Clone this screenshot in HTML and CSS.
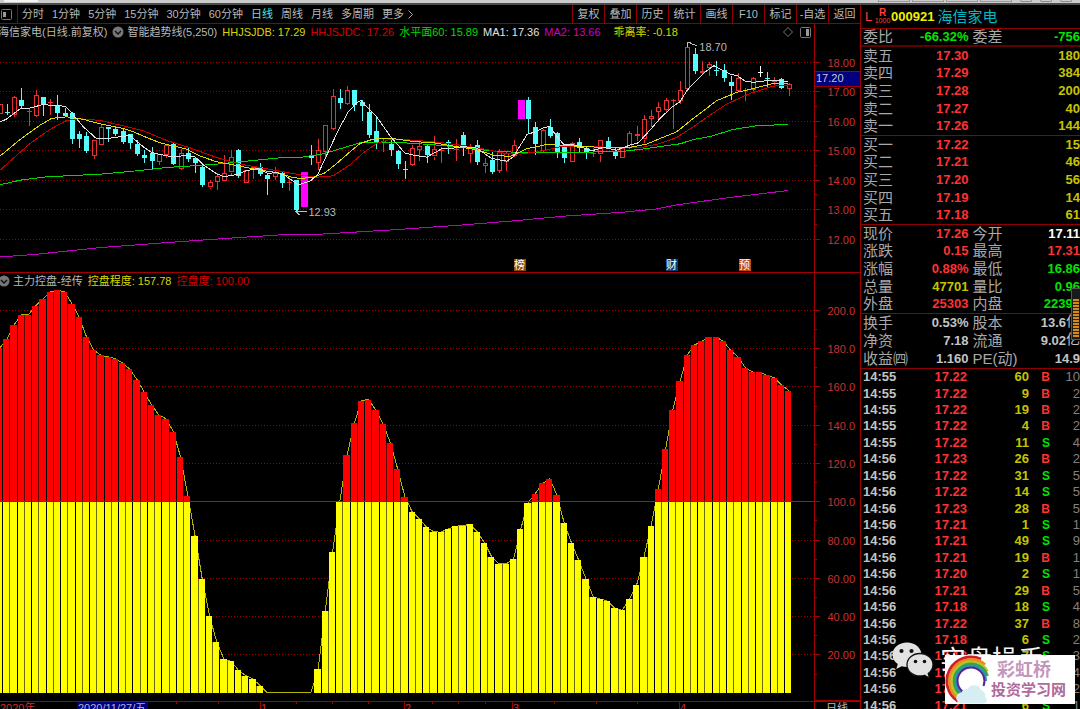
FILE: index.html
```html
<!DOCTYPE html>
<html lang="zh-CN">
<head>
<meta charset="utf-8">
<meta name="viewport" content="width=device-width, initial-scale=1">
<title>海信家电 000921 日线</title>
<link rel="stylesheet" href="styles.css">
</head>
<body>
<div class="strip">
  <span class="strip-tab"></span>
  <span class="strip-slots"><i></i><i></i><i></i><i></i><b></b><b></b><b></b></span>
</div>
<div class="app">
  <main class="charts">
    <nav class="toolbar">
      <button class="dock" aria-label="侧栏"><svg width="11" height="11" viewBox="0 0 11 11"><rect x="0.5" y="0.5" width="10" height="10" rx="1" fill="none" stroke="#777"/><rect x="2" y="3" width="3" height="5" fill="#999"/></svg></button>
      <div class="periods">
        <button>分时</button><button>1分钟</button><button>5分钟</button><button>15分钟</button><button>30分钟</button><button>60分钟</button><button class="active">日线</button><button>周线</button><button>月线</button><button>多周期</button><button>更多<svg class="chev" width="5" height="9" viewBox="0 0 5 9"><path d="M0.5 0.5L4.5 4.5L0.5 8.5" fill="none" stroke="#aaa"/></svg></button>
      </div>
      <div class="tools">
        <button>复权</button><button>叠加</button><button>历史</button><button>统计</button><button>画线</button><button>F10</button><button>标记</button><button>-自选</button><button>返回</button>
      </div>
    </nav>

    <section class="panel price">
      <svg class="plot" id="price"></svg>
      <header class="legend">
        <span class="title">海信家电(日线.前复权)</span>
        <button aria-label="指标菜单"><svg width="12" height="12" viewBox="0 0 12 12"><circle cx="6" cy="6" r="5.5" fill="#777"/><path d="M3 5L6 8L9 5" fill="none" stroke="#111" stroke-width="1.5"/></svg></button>
        <span>智能趋势线(5,250)</span>
        <span class="yellow">HHJSJDB: 17.29</span>
        <span class="crimson">HHJSJDC: 17.26</span>
        <span class="lime">水平面60: 15.89</span>
        <span class="white">MA1: 17.36</span>
        <span class="magenta">MA2: 13.66</span>
        <span class="yellow bias">乖离率: -0.18</span>
        <span class="marks">
          <svg width="12" height="12" viewBox="0 0 12 12"><path d="M6 1.5L10.5 6L6 10.5L1.5 6Z" fill="none" stroke="#777"/></svg>
          <svg width="11" height="11" viewBox="0 0 11 11"><rect x="0.5" y="0.5" width="10" height="10" rx="1" fill="none" stroke="#777"/><rect x="6" y="2" width="3" height="7" fill="#999"/></svg>
        </span>
      </header>
    </section>

    <section class="panel control">
      <svg class="plot" id="control"></svg>
      <header class="legend">
        <button class="first" aria-label="指标菜单"><svg width="12" height="12" viewBox="0 0 12 12"><circle cx="6" cy="6" r="5.5" fill="#777"/><path d="M3 5L6 8L9 5" fill="none" stroke="#111" stroke-width="1.5"/></svg></button>
        <span>主力控盘-经传</span>
        <span class="yellow">控盘程度: 157.78</span>
        <span class="crimson">控盘度: 100.00</span>
      </header>
    </section>
    <svg class="dates" id="dates"></svg>
  </main>

  <aside class="quote">
    <h1><span class="l">L</span><span class="r"><b>R</b><small>1000</small></span><span class="code">000921</span><span class="name">海信家电</span></h1>
    <table class="grid ratio"><tbody>
      <tr><th>委比</th><td class="g">-66.32%</td><th>委差</th><td class="g">-756</td></tr>
    </tbody></table>
    <table class="grid five"><tbody>
      <tr><th>卖五</th><td class="r">17.30</td><th></th><td class="y">180</td></tr>
      <tr><th>卖四</th><td class="r">17.29</td><th></th><td class="y">384</td></tr>
      <tr><th>卖三</th><td class="r">17.28</td><th></th><td class="y">200</td></tr>
      <tr><th>卖二</th><td class="r">17.27</td><th></th><td class="y">40</td></tr>
      <tr><th>卖一</th><td class="r">17.26</td><th></th><td class="y">144</td></tr>
    </tbody></table>
    <table class="grid five"><tbody>
      <tr><th>买一</th><td class="r">17.22</td><th></th><td class="y">15</td></tr>
      <tr><th>买二</th><td class="r">17.21</td><th></th><td class="y">46</td></tr>
      <tr><th>买三</th><td class="r">17.20</td><th></th><td class="y">56</td></tr>
      <tr><th>买四</th><td class="r">17.19</td><th></th><td class="y">14</td></tr>
      <tr><th>买五</th><td class="r">17.18</td><th></th><td class="y">61</td></tr>
    </tbody></table>
    <table class="grid five"><tbody>
      <tr><th>现价</th><td class="r">17.26</td><th>今开</th><td class="w">17.11</td></tr>
      <tr><th>涨跌</th><td class="r">0.15</td><th>最高</th><td class="r">17.31</td></tr>
      <tr><th>涨幅</th><td class="r">0.88%</td><th>最低</th><td class="g">16.86</td></tr>
      <tr><th>总量</th><td class="y">47701</td><th>量比</th><td class="g">0.96</td></tr>
      <tr><th>外盘</th><td class="r">25303</td><th>内盘</th><td class="g">22398</td></tr>
    </tbody></table>
    <table class="grid three"><tbody>
      <tr><th>换手</th><td>0.53%</td><th>股本</th><td>13.6<em>亿</em></td></tr>
      <tr><th>净资</th><td>7.18</td><th>流通</th><td>9.02<em>亿</em></td></tr>
      <tr><th>收益㈣</th><td>1.160</td><th>PE(动)</th><td>14.9</td></tr>
    </tbody></table>
    <div class="ticks">
    <table><tbody>
      <tr><td>14:55</td><td>17.22</td><td>60</td><td class="b">B</td><td>10</td></tr>
      <tr><td>14:55</td><td>17.22</td><td>9</td><td class="b">B</td><td>2</td></tr>
      <tr><td>14:55</td><td>17.22</td><td>19</td><td class="b">B</td><td>2</td></tr>
      <tr><td>14:55</td><td>17.22</td><td>4</td><td class="b">B</td><td>2</td></tr>
      <tr><td>14:55</td><td>17.22</td><td>11</td><td class="s">S</td><td>4</td></tr>
      <tr><td>14:56</td><td>17.23</td><td>26</td><td class="b">B</td><td>2</td></tr>
      <tr><td>14:56</td><td>17.22</td><td>31</td><td class="s">S</td><td>5</td></tr>
      <tr><td>14:56</td><td>17.22</td><td>14</td><td class="s">S</td><td>5</td></tr>
      <tr><td>14:56</td><td>17.23</td><td>28</td><td class="b">B</td><td>5</td></tr>
      <tr><td>14:56</td><td>17.21</td><td>1</td><td class="s">S</td><td>1</td></tr>
      <tr><td>14:56</td><td>17.21</td><td>49</td><td class="s">S</td><td>9</td></tr>
      <tr><td>14:56</td><td>17.21</td><td>19</td><td class="b">B</td><td>1</td></tr>
      <tr><td>14:56</td><td>17.20</td><td>2</td><td class="s">S</td><td>1</td></tr>
      <tr><td>14:56</td><td>17.21</td><td>29</td><td class="b">B</td><td>5</td></tr>
      <tr><td>14:56</td><td>17.18</td><td>18</td><td class="s">S</td><td>4</td></tr>
      <tr><td>14:56</td><td>17.22</td><td>37</td><td class="b">B</td><td>8</td></tr>
      <tr><td>14:56</td><td>17.18</td><td>6</td><td class="s">S</td><td>2</td></tr>
      <tr><td>14:56</td><td>17.18</td><td>7</td><td class="s">S</td><td>3</td></tr>
      <tr><td>14:56</td><td>17.19</td><td>5</td><td class="s">S</td><td>4</td></tr>
      <tr><td>14:56</td><td>17.20</td><td>8</td><td class="s">S</td><td>2</td></tr>
      <tr><td>14:56</td><td>17.21</td><td>6</td><td class="s">S</td><td>1</td></tr>
    </tbody></table>
    </div>
    <div class="meter"></div>
    <div class="wechat">
      <svg width="42" height="36" viewBox="0 0 42 36"><path d="M15 0.5C7 0.5 0.5 5.8 0.5 12.6c0 4 2 7.300 5.300 9.500L4.300 27l5.400-2.800c1.700.5 3.400.8 5.300.8 8 0 14.500-5.400 14.500-12.200S23 0.500 15 0.500Z" fill="#e2e2e2"/><circle cx="9.500" cy="9" r="2.100" fill="#111"/><circle cx="19.500" cy="9" r="2.100" fill="#111"/><path d="M28 11.500c-7.300 0-13 4.900-13 11.200S20.700 34 28 34c1.600 0 3-.2 4.400-.7L37.500 36l-1.300-4.600C39 29.300 41 26.200 41 22.700 41 16.400 35.300 11.500 28 11.500Z" fill="#e2e2e2" stroke="#111" stroke-width="1.300"/><circle cx="23.500" cy="19.500" r="1.800" fill="#111"/><circle cx="32.500" cy="19.500" r="1.800" fill="#111"/></svg>
      <span>实盘操手</span>
    </div>
    <div class="brand">
      <svg width="46" height="49" viewBox="0 0 46 49">
        <g fill="none" stroke-width="3">
          <path d="M13 46.200A24 24 0 0 1 36 4.200" stroke="#c8232c"/>
          <path d="M14.500 44.200A21.500 21.500 0 1 1 40 9.700" stroke="#f08a1d"/>
          <path d="M16 42.200A19 19 0 1 1 42.400 16.400" stroke="#b5c433"/>
          <path d="M17 40.400A17 17 0 1 1 42.400 21" stroke="#37a34a"/>
          <path d="M18 38.700A15 15 0 1 1 41 26" stroke="#2a8fc4" stroke-width="2"/>
          <path d="M18.500 37.200A13.500 13.500 0 1 1 38.500 31" stroke="#54288a" stroke-width="2"/>
        </g>
        <path d="M17 48.500a5.500 5.500 0 0 1-.5-11 5.500 5.500 0 0 1 6-3.500 7.500 7.500 0 0 1 13.500 1 5.500 5.500 0 0 1 4 7 3.500 3.500 0 0 1-1 6.500Z" fill="#d6eef2"/>
      </svg>
      <p><strong>彩虹桥</strong><b>投资学习网</b></p>
    </div>
  </aside>
</div>
<script src="chart.js"></script>
</body>
</html>
```

FILE: styles.css
```css
* { box-sizing: border-box; }

body {
  margin: 0;
  height: 100vh;
  overflow: hidden;
  display: flex;
  flex-direction: column;
  background: #000;
  color: #b8b8b8;
  font: 11px/16px "Liberation Sans", "Noto Sans CJK SC", sans-serif;
}

button {
  margin: 0;
  padding: 0;
  border: 0;
  background: none;
  color: inherit;
  font: inherit;
  white-space: nowrap;
}

svg { display: block; }

.strip {
  flex: none;
  height: 5px;
  display: flex;
  justify-content: space-between;
  padding: 0 8px 0 4px;
  background: #cbcbcb;
  border-bottom: 2px solid #4a4a4a;
}
.strip-tab { width: 34px; height: 2px; background: #f2f2f2; }
.strip-slots { display: flex; gap: 2px; height: 2px; }
.strip-slots i { width: 32px; border: 1px solid #999; border-top: 0; }
.strip-slots b {
  width: 12px;
  margin-left: 6px;
  border: 1px solid #888;
  border-top: 0;
  border-radius: 0 0 6px 6px;
}

.app { flex: 1; min-height: 0; display: flex; }
.charts { flex: 1; min-width: 0; display: flex; flex-direction: column; }

.toolbar {
  flex: none;
  height: 19px;
  display: flex;
  border-bottom: 1px solid #900000;
}
.dock { padding: 0 4px 0 1px; border-right: 1px solid #900000; width: 18px; }
.periods { display: flex; gap: 8px; padding-left: 4px; }
.periods button { display: flex; align-items: center; gap: 4px; }
.periods .active { color: #4fe6e6; }
.tools { display: flex; margin-left: auto; }
.tools button { width: 32px; border-left: 1px solid #900000; }

.panel { display: grid; min-height: 0; border-bottom: 1px solid #a00000; }
.panel > * { grid-area: 1 / 1; min-width: 0; }
.price { flex: 249; }
.control { flex: 429; }
.plot { width: 100%; height: 100%; min-height: 0; overflow: hidden; }
.legend {
  z-index: 1;
  align-self: start;
  height: 16px;
  display: flex;
  align-items: center;
  gap: 5px;
  padding-right: 49px;
  white-space: nowrap;
}
.title { margin-left: -2px; }
.first { margin-left: -2px; }
.legend button + span { margin-left: -2px; }
.bias { margin-left: 8px; }
.marks { display: flex; align-items: center; gap: 6px; margin-left: auto; }
.yellow { color: #d8d800; }
.crimson { color: #d00000; }
.lime { color: #00dc00; }
.white { color: #e4e4e4; }
.magenta { color: #c800c8; }
.dates { flex: none; width: 100%; height: 7px; overflow: hidden; }

.plot text, .dates text { font: 11px "Liberation Sans", "Noto Sans CJK SC", sans-serif; }
.plot .badge { fill: #fff; }

.quote {
  flex: none;
  width: 220px;
  position: relative;
  display: flex;
  flex-direction: column;
  overflow: hidden;
  border-left: 1px solid #a00000;
  white-space: nowrap;
}
.quote h1 {
  flex: none;
  height: 24px;
  margin: 0;
  display: flex;
  align-items: center;
  padding-left: 4px;
  border-bottom: 1px solid #900000;
  font-size: 13px;
  color: #ff3c3c;
}
.quote .l { width: 9px; font-weight: 400; }
h1 .r { display: grid; width: 17px; justify-items: center; line-height: 9px; font-size: 10px; }
h1 .r small { font-size: 7px; line-height: 8px; font-weight: 400; }
.code { color: #f0f000; }
.name { margin-left: 3px; color: #00b8c8; font-size: 15px; font-weight: 400; }

table { width: 100%; table-layout: fixed; border-collapse: separate; border-spacing: 0; }
th, td { padding: 0; line-height: 16px; }
.grid { flex: none; border-bottom: 1px solid #900000; }
.grid th { width: 44px; padding-left: 2px; text-align: left; font-size: 15px; font-weight: 400; color: #a8a8a8; }
.grid td { text-align: right; font-size: 13px; font-weight: 700; color: #c4c4c4; }
.grid em { font-style: normal; font-weight: 400; font-size: 14px; line-height: 12px; vertical-align: top; }
.grid th:nth-child(3) { width: 48px; padding-left: 4px; }
.ratio { height: 18px; border-bottom: 2px solid #600000; }
.five { height: 89px; }
.three { height: 55px; }
.grid .r { color: #ff3232; }
.grid .g { color: #00e400; }
.grid .y { color: #c4c400; }
.grid .w { color: #fff; }

.ticks { flex: 1; min-height: 0; overflow: hidden; }
.ticks table { height: 345px; }
.ticks td { font-size: 13px; font-weight: 700; text-align: right; color: #c4c400; }
.ticks td:nth-child(1) { width: 36px; padding-left: 2px; text-align: left; color: #c4c4c4; }
.ticks td:nth-child(2) { color: #ff3232; }
.ticks td:nth-child(3) { width: 62px; }
.ticks td:nth-child(4) { width: 21px; font-size: 12px; }
.ticks td:nth-child(5) { width: 30px; color: #808080; font-weight: 400; }
.ticks .b, .ticks td.b { color: #ff3232; }
.ticks .s, .ticks td.s { color: #00e400; }

.meter {
  position: absolute;
  top: 283px;
  right: 0;
  width: 9px;
  height: 52px;
  padding: 10px 1px 2px;
  border: 1px solid #555;
  border-right: 0;
  background: repeating-linear-gradient(#d08820 0 2px, #3a2400 2px 3px) content-box, #1a1a1a;
}
.wechat {
  position: absolute;
  left: 31px;
  bottom: 31px;
  display: flex;
  align-items: center;
  gap: 6px;
  color: #f4f4f4;
  font-size: 26px;
  line-height: 36px;
}
.brand {
  position: absolute;
  right: 5px;
  bottom: 5px;
  width: 130px;
  height: 49px;
  display: flex;
  background: #fff;
  color: #b06a9c;
}
.brand p { margin: 0; display: grid; align-content: center; }
.brand strong { padding-left: 6px; font-size: 18px; line-height: 20px; font-weight: 700; color: #c596bc; }
.brand b { font-size: 15px; line-height: 19px; }
```

FILE: chart.js
```js
(function () {
  var AXIS = 45;          // width of the scale at the right
  var UP = '#e83030', DOWN = '#54fcfc', LINE = '#a00000', SCALE = '#c83232';
  var COUNT = 109;

  // One row per bar: wick top, body top, body bottom, wick bottom, kind.
  // Levels are counted downwards from 17.40, 88.2 to the yuan.
  var candles = [
    [72,72,102,102,'r'],[72,95,100,104,'c'],[48,50,104,110,'r'],[24,60,78,88,'c'],[84,92,94,138,'r'],
    [30,44,106,112,'r'],[50,50,74,108,'c'],[57,65,69,104,'r'],[44,74,98,120,'c'],[84,98,108,110,'c'],
    [95,98,176,192,'c'],[153,162,176,204,'c'],[156,168,214,220,'c'],[180,180,228,238,'r'],[131,141,194,194,'r'],
    [140,141,148,186,'c'],[138,148,162,168,'c'],[147,154,186,192,'c'],[162,162,189,206,'c'],[180,192,222,228,'c'],
    [210,225,234,248,'c'],[202,218,242,267,'c'],[222,222,246,254,'r'],[192,195,224,234,'r'],[185,192,252,256,'c'],
    [207,220,268,270,'r'],[202,219,238,246,'c'],[232,234,250,279,'c'],[256,260,315,321,'c'],[300,306,322,327,'r'],
    [280,288,306,329,'r'],[226,278,301,303,'r'],[210,232,278,285,'r'],[208,209,288,293,'c'],[270,271,310,311,'r'],
    [258,262,268,298,'r'],[250,262,282,288,'c'],[280,285,297,344,'c'],[262,279,291,300,'r'],[273,280,309,322,'c'],
    [293,304,308,332,'r'],[300,300,389,392,'c'],[275,275,381,381,'m'],[195,227,235,254,'c'],[178,209,248,270,'r'],
    [136,136,217,234,'r'],[28,48,147,150,'r'],[28,53,69,86,'c'],[17,30,71,74,'r'],[30,30,75,92,'c'],
    [60,65,78,123,'c'],[72,95,165,174,'c'],[108,153,187,206,'c'],[175,183,187,215,'r'],[180,191,210,228,'c'],
    [210,213,252,267,'c'],[244,266,268,297,'c'],[194,204,255,258,'r'],[185,197,209,242,'r'],[194,198,226,249,'c'],
    [168,208,230,240,'r'],[202,209,212,249,'r'],[180,187,190,222,'c'],[178,206,209,242,'r'],[156,165,199,228,'c'],
    [192,204,221,249,'r'],[180,195,246,255,'c'],[234,249,258,278,'r'],[216,240,276,282,'c'],[207,215,272,280,'r'],
    [213,218,244,274,'r'],[180,196,228,230,'r'],[60,60,116,116,'m'],[51,60,118,162,'c'],[126,140,191,224,'c'],
    [147,150,212,215,'r'],[117,141,168,174,'c'],[156,158,215,234,'c'],[198,201,234,249,'c'],[186,188,244,245,'r'],
    [174,185,203,215,'c'],[200,204,218,238,'c'],[205,218,221,232,'r'],[180,181,224,245,'r'],[172,183,200,204,'c'],
    [205,213,227,238,'c'],[204,205,236,237,'r'],[153,160,205,208,'r'],[138,163,167,182,'r'],[105,118,179,190,'r'],
    [90,108,118,140,'r'],[66,81,96,125,'r'],[54,61,91,100,'r'],[58,59,62,148,'r'],[3,31,63,72,'r'],
    [-104,-98,29,32,'r'],[-96,-78,-27,-18,'c'],[-57,-26,-20,-18,'r'],[-53,-48,-35,-12,'r'],[-57,-31,-28,-12,'c'],
    [-47,-30,-7,5,'c'],[-12,5,18,60,'c'],[-21,-5,35,36,'r'],[25,30,33,63,'r'],[-10,-5,31,34,'r'],
    [-43,-25,-23,-8,'w'],[-24,-7,-3,24,'c'],[-10,3,6,15,'r'],[-5,-3,25,27,'c'],[10,13,28,47,'r']
  ];

  // Trend lines: x over a plot 2445 wide, level as above.
  var trends = [
    ['#c000c0', [0,530,100,523,300,502,500,487,700,473,840,464,960,462,1190,448,1390,434,1540,422,1690,408,1870,396,1970,386,2030,374,2180,353,2364,331]],
    ['#00d800', [0,314,60,300,140,290,300,282,420,271,500,262,640,253,760,241,840,233,900,232,970,221,1080,188,1180,186,1290,193,1390,202,1490,214,1600,218,1740,216,1860,215,1940,205,2040,191,2080,178,2130,169,2200,148,2270,137,2364,133]],
    ['#c80000', [0,270,90,190,150,148,200,121,240,116,300,121,360,135,430,152,500,181,570,203,650,232,720,252,800,266,900,284,950,291,1000,287,1050,254,1090,218,1130,190,1170,178,1240,180,1320,187,1400,198,1460,208,1500,218,1560,222,1620,214,1690,198,1780,200,1920,203,1980,190,2030,172,2080,140,2130,105,2180,72,2250,40,2320,18,2364,15]],
    ['#dcdc00', [0,228,60,178,120,135,155,115,200,110,250,118,300,131,370,145,400,155,440,172,480,188,560,207,600,228,650,245,700,254,770,268,840,279,870,290,900,295,940,291,975,278,1010,250,1050,215,1080,190,1120,177,1170,174,1240,184,1300,188,1380,201,1430,209,1480,225,1530,229,1580,206,1640,193,1710,197,1830,203,1890,202,1940,192,1980,175,2030,155,2080,115,2150,62,2210,37,2270,23,2320,10,2364,10]],
    ['#e0e0e0', [0,125,18,118,60,86,90,84,130,73,165,77,195,78,217,100,250,140,290,176,330,174,390,166,430,200,455,217,485,224,520,231,555,226,585,230,610,254,650,281,672,290,715,282,740,271,775,265,805,280,830,277,855,286,895,314,930,303,953,283,985,215,1015,150,1045,95,1070,68,1083,62,1130,110,1172,170,1215,219,1240,225,1280,231,1325,206,1360,204,1388,199,1430,204,1475,235,1520,243,1540,230,1582,162,1605,156,1630,143,1649,139,1670,168,1691,193,1710,192,1735,197,1775,212,1810,202,1850,210,1890,195,1915,188,1950,150,1980,115,2015,82,2040,65,2062,30,2090,0,2120,-28,2142,-43,2165,-30,2190,-18,2212,-13,2235,3,2260,7,2300,2,2340,2,2364,5]]
  ];

  var control = [
    179.9,184.6,192.1,197.3,197.3,202.2,205.6,209.3,210.3,209.3,203.2,196.1,186,179,176.2,175.4,174.5,172.2,168.9,163.5,
    156.9,150.3,145.1,143,136.4,123.2,103,82.1,59.3,40.2,26.6,17.4,16.4,11.7,8.9,7.3,3.7,0,0,0,
    0,0,0,0,12.2,42.6,73.6,100,124,140.7,152.6,153.1,147.4,140.2,130.3,116.9,102.1,94.5,90.8,86.3,
    84,83.9,85.6,87,87.3,87.9,84,78.3,70.8,67.3,67.3,69.8,85.6,99.3,104,109.3,111.7,103.2,88.4,78.3,
    69.2,59.5,50.1,48.9,47.8,44,43.1,48.9,56.4,70.8,87.3,106.5,127.3,147.9,162.7,176.4,181.6,183.5,185.8,185.8,
    183.5,178.8,175.4,169.8,167.5,167.4,165.8,164.6,160.8,157.78
  ];

  function tag(name, attrs, text) {
    var s = '<' + name;
    for (var k in attrs) s += ' ' + k + '="' + attrs[k] + '"';
    return s + '>' + (text || '') + '</' + name + '>';
  }
  function line(x1, y1, x2, y2, stroke, dash) {
    var a = { x1: x1, y1: y1, x2: x2, y2: y2, stroke: stroke, 'shape-rendering': 'crispEdges' };
    if (dash) a['stroke-dasharray'] = dash;
    return tag('line', a);
  }
  function rect(x, y, w, h, fill, stroke) {
    return tag('rect', { x: x, y: y, width: w, height: Math.max(h, 1), fill: fill, stroke: stroke || 'none', 'shape-rendering': 'crispEdges' });
  }
  function label(x, y, fill, text, anchor) {
    return tag('text', { x: x, y: y, fill: fill, 'text-anchor': anchor || 'start' }, text);
  }
  function poly(points, stroke) {
    return tag('polyline', { points: points.join(' '), fill: 'none', stroke: stroke, 'shape-rendering': 'crispEdges' });
  }
  function barX(w, i) { return w * (788.7 - (COUNT - i) * 7.24) / 815; }

  function drawPrice() {
    var el = document.getElementById('price');
    var box = el.getBoundingClientRect(), w = Math.round(box.width - AXIS), h = box.height, k = h / 248;
    var Y = function (u) { return (56 + u / 3) * k; };
    var P = function (p) { return (38 + (18 - p) * 29.4) * k; };
    var out = '', p, y;
    for (p = 12; p <= 18; p++) {
      y = Math.round(P(p)) + 0.5;
      out += line(0, y, w, y, LINE, '1 2') + line(w, y, w + 5, y, LINE) + label(w + AXIS - 5, y + 4, SCALE, p + '.00', 'end');
      if (p < 18) { y = Math.round(P(p + 0.5)) + 0.5; out += line(w, y, w + 2, y, LINE); }
    }
    candles.forEach(function (c, i) {
      var x = Math.round(barX(w, i)), a = Y(c[0]), b = Y(c[1]), d = Y(c[2]), e = Y(c[3]), kind = c[4];
      if (kind === 'm') { out += rect(x - 3, b, 7, d - b, '#ff00ff'); return; }
      var col = kind === 'r' ? UP : kind === 'c' ? DOWN : '#ffffff';
      if (kind === 'r' && d - b > 3) {
        out += line(x + 0.5, a, x + 0.5, b, col) + line(x + 0.5, d, x + 0.5, e, col);
        out += rect(x - 1.5, Math.round(b) + 0.5, 4, Math.round(d - b) - 1, 'none', col);
      } else {
        out += line(x + 0.5, a, x + 0.5, e, col) + rect(x - 2, b, 5, d - b, col);
      }
    });
    trends.forEach(function (t) {
      var pts = [];
      for (var i = 0; i < t[1].length; i += 2) pts.push((t[1][i] * w / 2445).toFixed(1) + ',' + Y(t[1][i + 1]).toFixed(1));
      out += poly(pts, t[0]);
    });
    var hi = barX(w, 95), lo = barX(w, 41);
    out += poly([(hi + 4) + ',' + 18 * k, hi + ',' + 18 * k, hi + ',' + 23 * k], '#c0c0c0') + poly([hi + ',' + 18 * k, (hi + 10) + ',' + 22 * k], '#c0c0c0');
    out += label(hi + 12, 27 * k, '#b8b8b8', '18.70');
    out += poly([(lo + 11) + ',' + 187.5 * k, lo + ',' + 187.5 * k, (lo + 3) + ',' + 190.5 * k], '#c0c0c0') + poly([lo + ',' + 187.5 * k, (lo + 3) + ',' + 184.5 * k], '#c0c0c0');
    out += label(lo + 12, 192 * k, '#b8b8b8', '12.93');
    [[519.5, '#8a4a08', '榜'], [671.5, '#0c3c74', '财'], [744.5, '#c04810', '预']].forEach(function (b) {
      var x = b[0] * w / 815;
      out += rect(x - 6, h - 13, 12, 12, b[1]) + tag('text', { 'class': 'badge', x: x, y: h - 3, 'text-anchor': 'middle' }, b[2]);
    });
    out += line(w - 0.5, 0, w - 0.5, h, LINE);
    y = Math.round(47 * k);
    out += rect(w, y, AXIS, 16, '#000080') + line(w, y + 0.5, w + AXIS, y + 0.5, LINE) + line(w, y + 15.5, w + AXIS, y + 15.5, LINE);
    out += label(w + 1, y + 11, '#c8c8c8', '17.20');
    el.innerHTML = out;
  }

  function drawControl() {
    var el = document.getElementById('control');
    var box = el.getBoundingClientRect(), w = Math.round(box.width - AXIS), h = box.height, k = h / 428;
    var Y = function (v) { return (420 - v * 1.916) * k; };
    var half = 3.62 * w / 815, out = '', v, y;
    for (v = 20; v <= 200; v += 20) {
      y = Math.round(Y(v)) + 0.5;
      out += line(0, y, w, y, LINE, '1 2') + line(w, y, w + 5, y, LINE) + label(w + AXIS - 5, y + 4, SCALE, v < 100 ? v.toFixed(2) : v.toFixed(1), 'end');
      y = Math.round(Y(v - 10)) + 0.5;
      out += line(w, y, w + 2, y, LINE);
    }
    out += poly(control.map(function (c, i) { return barX(w, i).toFixed(1) + ',' + Y(c).toFixed(1); }), '#b4b400');
    var mid = Math.round(Y(100)), base = Math.round(Y(0));
    control.forEach(function (c, i) {
      if (!c) return;
      // Bars sit on whole pixels, with one pixel between neighbours.
      var x = Math.round(barX(w, i) - half), next = Math.round(barX(w, i + 1) - half);
      var top = Math.round(Y(c)), bw = next - x - 1, from = Math.max(top, mid);
      if (i < control.length - 1) {
        var low = Math.round(Y(Math.min(c, control[i + 1]))), y0 = Math.max(low, mid);
        out += rect(next - 1, y0, 1, base - y0, i % 2 ? '#6a6a00' : '#000000');
        if (low < mid) out += rect(next - 1, low, 1, mid - low, i % 2 ? '#600000' : '#000000');
      }
      out += rect(x, from, bw, base - from, '#ffff00');
      if (top < mid) out += rect(x, top, bw, mid - top, '#ff0000');
    });
    out += line(0, mid + 0.5, w, mid + 0.5, '#d80000');
    out += line(w - 0.5, 0, w - 0.5, h, LINE) + line(w, h - 0.5, w + AXIS, h - 0.5, LINE);
    el.innerHTML = out;
  }

  function drawDates() {
    var el = document.getElementById('dates');
    var w = Math.round(el.getBoundingClientRect().width - AXIS), s = w / 815, out = '';
    [176, 218, 296, 332, 368, 432, 458, 485, 554, 596, 637].forEach(function (x) { out += line(x * s, 0, x * s, 2, LINE); });
    [[260, '1'], [404, '2'], [512, '3'], [679, '4']].forEach(function (m) {
      out += line(m[0] * s, 0, m[0] * s, 9, LINE) + label(m[0] * s + 1, 10, SCALE, m[1]);
    });
    out += label(0, 10, SCALE, '2020年');
    out += rect(77 * s, 0, 71, 9, '#000080') + label(78 * s, 10, '#b0b0d0', '2020/11/27/五');
    out += line(w - 0.5, 0, w - 0.5, 9, LINE) + label(w + 11, 10, '#b8b8b8', '日线');
    el.innerHTML = out;
  }

  function draw() { drawPrice(); drawControl(); drawDates(); }
  window.addEventListener('resize', draw);
  draw();
})();
```
